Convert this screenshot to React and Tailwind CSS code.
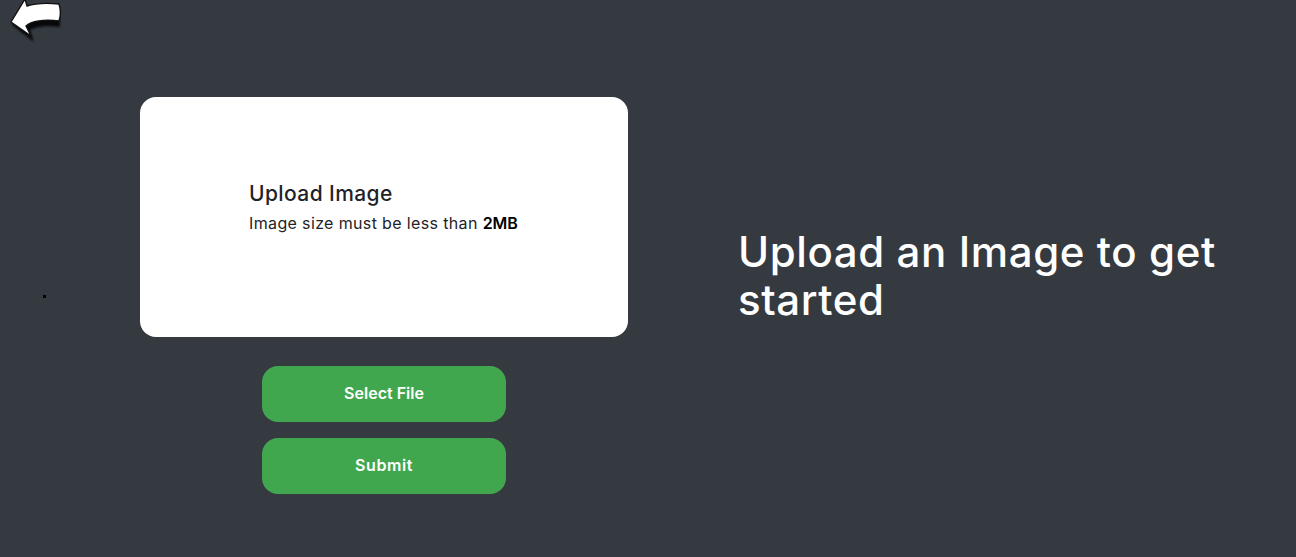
export default function App() {
  return (
    <div className="relative h-[557px] w-full overflow-hidden bg-[#353a41] font-['Inter',sans-serif]">
      {/* Back arrow */}
      <svg className="absolute left-0 top-0" width="70" height="46" viewBox="0 0 70 46">
        <defs>
          <filter id="soft" x="-20%" y="-20%" width="140%" height="140%">
            <feGaussianBlur stdDeviation="1" />
          </filter>
        </defs>
        <path d="M24 2 L12 25 L34 42 L30 30 C35 27 46 25 60 27 L60 10 L30 10 Z" fill="#000" filter="url(#soft)" opacity="0.85" />
        <path d="M25 -1 L11 22 L31 36 L26 26 C31 21 44 19 59 21 C61 15 61 10 59 4 C48 3 36 3 27 6 Z" fill="#fff" stroke="#111" strokeWidth="1.4" strokeLinejoin="round" />
      </svg>
      <div className="absolute left-[43px] top-[295px] h-[3px] w-[3px] bg-black" />

      <div className="flex">
        <div className="ml-[140px] flex w-[488px] flex-col items-center pt-[97px]">
          <div className="flex h-[240px] w-full flex-col justify-center rounded-2xl bg-white pb-[21px] pl-[109px]">
            <h2 className="text-[21px] leading-[30px] font-medium tracking-[0.4px] text-[#1f2328]">Upload Image</h2>
            <p className="mt-[2px] text-[16px] leading-[24px] tracking-[0.36px] text-[#1f2328]">
              Image size must be less than <b className="font-semibold tracking-normal text-black">2MB</b>
            </p>
          </div>
          <button className="mt-[29px] h-14 w-[244px] rounded-2xl bg-[#41a74e] pb-[2px] text-[16px] font-semibold text-white">Select File</button>
          <button className="mt-4 h-14 w-[244px] rounded-2xl bg-[#41a74e] pb-[2px] text-[16px] font-semibold tracking-[0.6px] text-white">Submit</button>
        </div>
        <div className="ml-[110px] w-[500px] pt-[228px]">
          <h1 className="text-[42px] leading-[48px] font-medium tracking-[0.6px] text-white">Upload an Image to get started</h1>
        </div>
      </div>
    </div>
  );
}
